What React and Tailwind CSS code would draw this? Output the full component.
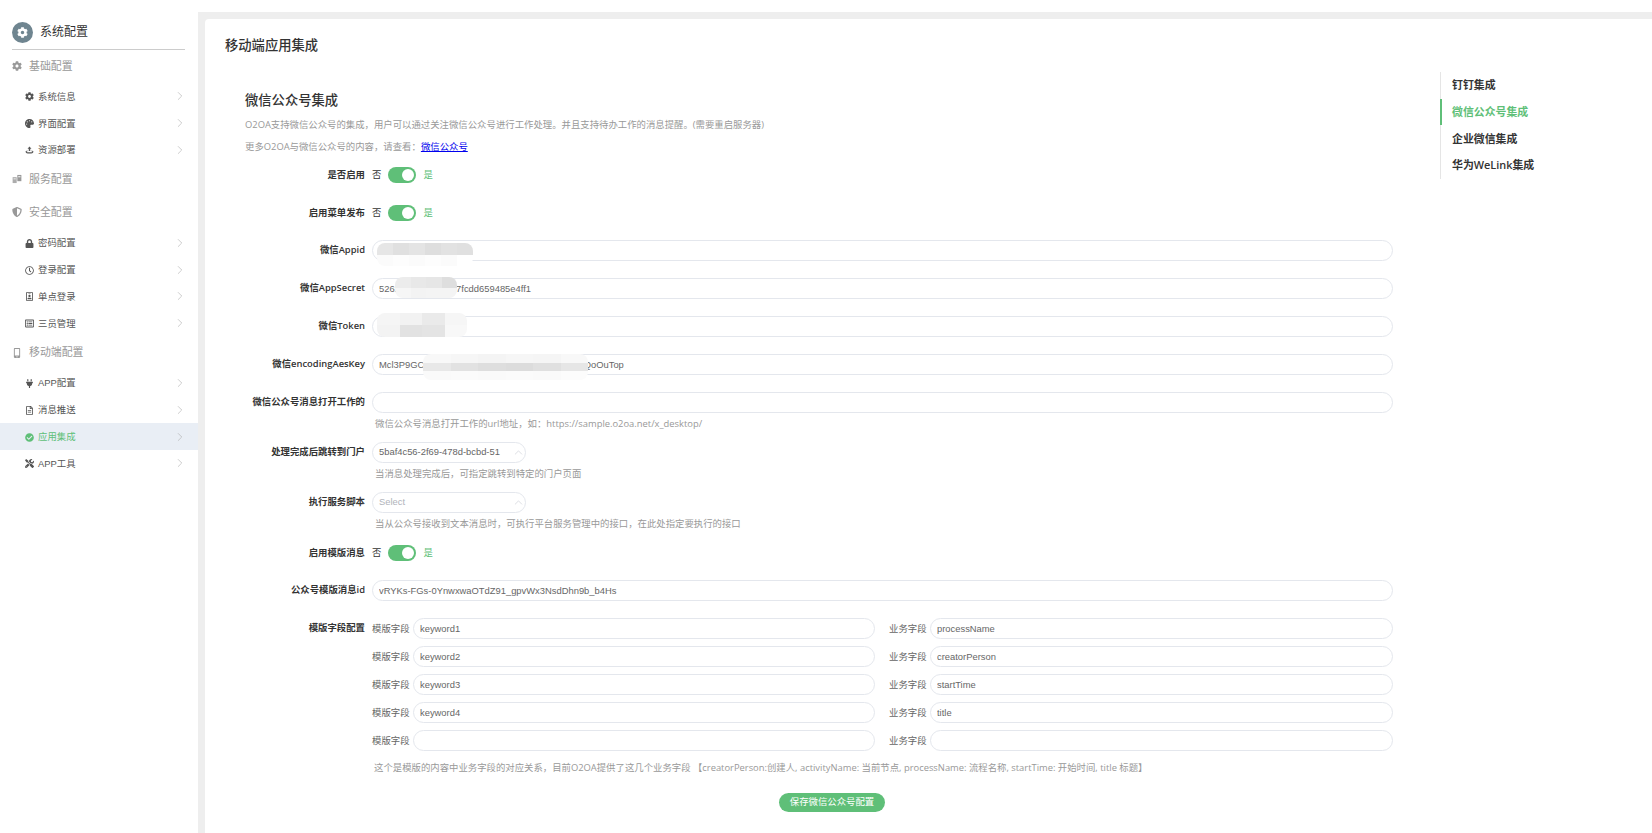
import { ChevronRight, ChevronUp } from 'lucide-react';
import { FaCog, FaLock, FaPlug, FaShieldAlt, FaTools, FaRegClock, FaRegIdBadge, FaRegListAlt, FaMobileAlt, FaRegFileAlt, FaCheckCircle, FaPalette } from 'react-icons/fa';

const TrayIcon = ({ className }) => (
  <svg viewBox="0 0 16 16" className={className} fill="currentColor">
    <path d="M8 1 11.5 5H9.3v4H6.7V5H4.5z" />
    <path d="M1 10c0-1 1.5-1.700 3.500-2v1.500C3.300 9.700 2.800 10 2.800 10.300c0 .5 2.200 1 5.200 1s5.200-.5 5.200-1c0-.3-.5-.6-1.700-.8V8c2 .3 3.500 1 3.500 2 0 2-3 3.500-7 3.500S1 12 1 10z" />
  </svg>
);

const CardsIcon = ({ className }) => (
  <svg viewBox="0 0 16 16" className={className} fill="currentColor">
    <path d="M1 5h6.500v9.500H1z" opacity=".8" />
    <path d="M8.500 1.500H15v10H8.500z" />
    <path d="M2.500 7h3.500v1.500H2.500zM10 3.500h3.500V5H10z" fill="#fff" />
  </svg>
);

// Sidebar groups
const menu = [
  {
    title: '基础配置',
    icon: FaCog,
    items: [
      { label: '系统信息', icon: FaCog },
      { label: '界面配置', icon: FaPalette },
      { label: '资源部署', icon: TrayIcon },
    ],
  },
  { title: '服务配置', icon: CardsIcon, items: [] },
  {
    title: '安全配置',
    icon: FaShieldAlt,
    items: [
      { label: '密码配置', icon: FaLock },
      { label: '登录配置', icon: FaRegClock },
      { label: '单点登录', icon: FaRegIdBadge },
      { label: '三员管理', icon: FaRegListAlt },
    ],
  },
  {
    title: '移动端配置',
    icon: FaMobileAlt,
    items: [
      { label: 'APP配置', icon: FaPlug },
      { label: '消息推送', icon: FaRegFileAlt },
      { label: '应用集成', icon: FaCheckCircle, active: true },
      { label: 'APP工具', icon: FaTools },
    ],
  },
];

const fieldRows = [
  ['keyword1', 'processName'],
  ['keyword2', 'creatorPerson'],
  ['keyword3', 'startTime'],
  ['keyword4', 'title'],
  ['', ''],
];

const tabs = ['钉钉集成', '微信公众号集成', '企业微信集成', '华为WeLink集成'];

// Pixelated patches that hide the secrets in the screenshot
const Mosaic = ({ className, rows }) => (
  <div className={`absolute z-10 overflow-hidden rounded-[8px] flex flex-col ${className}`}>
    {rows.map((row, i) => (
      <div key={i} className="flex flex-1">
        {row.map((c, j) => (
          <div key={j} className="flex-1" style={{ background: c }} />
        ))}
      </div>
    ))}
  </div>
);

const Sidebar = () => (
  <aside className="w-[198px] shrink-0 bg-white">
    <div className="ml-[12px] mr-[13px] h-[50px] pt-[12px] flex items-start border-b border-[#cccccc]">
      <div className="w-[21px] h-[21px] mt-[10px] -mb-px rounded-full bg-[#6f8590] flex items-center justify-center">
        <FaCog className="w-[11px] h-[11px] text-white" />
      </div>
      <span className="ml-[7px] mt-[12px] text-[12px] leading-[16px] text-[#333333]">系统配置</span>
    </div>
    {menu.map((group) => (
      <div key={group.title}>
        <div className="h-[33px] pb-px flex items-center pl-[12px] text-[#999999]">
          <group.icon className="w-[10px] h-[10px]" />
          <span className="ml-[7px] text-[10.9px]">{group.title}</span>
        </div>
        {group.items.map((item) => (
          <div
            key={item.label}
            className={`h-[26.8px] pt-px flex items-center pl-[25px] pr-[11px] text-[9.4px] ${item.active ? 'bg-[#e9eef5] text-[#5fbf78]' : 'text-[#555555]'}`}
          >
            <item.icon className="w-[9px] h-[9px] shrink-0" />
            <span className="ml-[4px] flex-1">{item.label}</span>
            <ChevronRight className="w-[14px] h-[14px] text-[#aaaaaa] -mt-px" strokeWidth={1} />
          </div>
        ))}
      </div>
    ))}
  </aside>
);

const Label = ({ children }) => (
  <div className="w-[120px] shrink-0 text-right text-[9.4px] font-semibold text-[#333333] whitespace-nowrap font-['Open_Sans','Noto_Sans_CJK_SC',sans-serif]">{children}</div>
);

const Hint = ({ children, className = '' }) => (
  <div className={`h-[14px] leading-[14px] text-[9.4px] text-[#999999] whitespace-nowrap font-['Open_Sans','Noto_Sans_CJK_SC',sans-serif] ${className}`}>{children}</div>
);

const TextBox = ({ value = '', className = '' }) => (
  <input
    readOnly
    value={value}
    className={`h-[21px] px-[6px] rounded-full border border-[#e4e7ed] bg-white text-[9.4px] text-[#666666] outline-none ${className}`}
  />
);

const InputRow = ({ label, value, className = '' }) => (
  <div className={`flex items-center gap-[7px] h-[21px] ${className}`}>
    <Label>{label}</Label>
    <TextBox value={value} className="flex-1 min-w-0" />
  </div>
);

const SelectRow = ({ label, value, placeholder, className = '' }) => (
  <div className={`flex items-center gap-[7px] h-[21px] ${className}`}>
    <Label>{label}</Label>
    <div className="w-[154px] h-[21px] pl-[6px] rounded-full border border-[#e4e7ed] flex items-center justify-between text-[9.4px]">
      <span className={placeholder ? 'text-[#b0b3ba]' : 'text-[#666666]'}>{placeholder || value}</span>
      <ChevronUp className="w-[13px] h-[13px] text-[#c0c4cc]" strokeWidth={1} />
    </div>
  </div>
);

const SwitchRow = ({ label, className = '' }) => (
  <div className={`flex items-center gap-[7px] h-[16px] ${className}`}>
    <Label>{label}</Label>
    <span className="text-[9.4px] text-[#333333]">否</span>
    <div className="w-[28px] h-[16px] rounded-full bg-[#5fbf78] flex items-center justify-end pr-[2px]">
      <div className="w-[12px] h-[12px] rounded-full bg-white" />
    </div>
    <span className="text-[9.4px] text-[#5fbf78]">是</span>
  </div>
);

function App() {
  return (
    <div className="flex h-screen w-full overflow-hidden bg-white font-['Liberation_Sans','Noto_Sans_CJK_SC',sans-serif]">
      <Sidebar />
      <main className="flex-1 min-w-0 pt-[12px]">
        <div className="h-full bg-[#eeeeee] pl-[7px] pt-[7px]">
          <div className="h-full bg-white rounded-tl-[4px] flex">
            <div className="w-[1235px] shrink-0 pl-[40px] pr-[47px] relative">
              <div className="-ml-[20px] h-[52px] pt-px flex items-center text-[13.3px] font-medium text-[#333333]">移动端应用集成</div>
              <div className="mt-[20px] h-[20px] leading-[20px] text-[13.3px] font-medium text-[#333333]">微信公众号集成</div>
              <Hint className="mt-[7px]">O2OA支持微信公众号的集成，用户可以通过关注微信公众号进行工作处理。并且支持待办工作的消息提醒。(需要重启服务器)</Hint>
              <Hint className="mt-[8px]">
                更多O2OA与微信公众号的内容，请查看：<a className="text-[#0000ee] underline">微信公众号</a>
              </Hint>

              <SwitchRow label="是否启用" className="mt-[13px]" />
              <SwitchRow label="启用菜单发布" className="mt-[22px]" />

              <InputRow label="微信Appid" className="mt-[19px]" />
              <InputRow label="微信AppSecret" value="526xxxxxxxxxxxx17fcdd659485e4ff1" className="mt-[17px]" />
              <InputRow label="微信Token" className="mt-[17px]" />
              <InputRow label="微信encodingAesKey" value="Mcl3P9GCxxxxxxxxxxxxxxxxxxxxxxxxxxxxxxxxxxQoOuTop" className="mt-[17px]" />
              <InputRow label="微信公众号消息打开工作的" className="mt-[17px]" />
              <Hint className="mt-[4px] ml-[130px]">微信公众号消息打开工作的url地址，如：https://sample.o2oa.net/x_desktop/</Hint>

              <SelectRow label="处理完成后跳转到门户" value="5baf4c56-2f69-478d-bcbd-51" className="mt-[11px]" />
              <Hint className="mt-[4px] ml-[130px]">当消息处理完成后，可指定跳转到特定的门户页面</Hint>
              <SelectRow label="执行服务脚本" placeholder="Select" className="mt-[11px]" />
              <Hint className="mt-[4px] ml-[130px]">当从公众号接收到文本消息时，可执行平台服务管理中的接口，在此处指定要执行的接口</Hint>

              <SwitchRow label="启用模版消息" className="mt-[14px]" />
              <InputRow label="公众号模版消息id" value="vRYKs-FGs-0YnwxwaOTdZ91_gpvWx3NsdDhn9b_b4Hs" className="mt-[19px]" />

              <div className="mt-[17px] flex gap-[7px]">
                <div className="w-[120px] shrink-0 h-[21px] pt-[3px]">
                  <Label>模版字段配置</Label>
                </div>
                <div className="flex-1 min-w-0 flex flex-col gap-[7px]">
                  {fieldRows.map(([left, right], i) => (
                    <div key={i} className="flex items-center h-[21px] text-[9.4px] text-[#666666]">
                      <span className="w-[41px] shrink-0 pt-[2px]">模版字段</span>
                      <TextBox value={left} className="w-[462px]" />
                      <span className="ml-[14px] w-[41px] shrink-0 pt-[2px]">业务字段</span>
                      <TextBox value={right} className="flex-1 min-w-0" />
                    </div>
                  ))}
                </div>
              </div>
              <Hint className="mt-[10px] ml-[129px]">这个是模版的内容中业务字段的对应关系，目前O2OA提供了这几个业务字段 【creatorPerson:创建人, activityName: 当前节点, processName: 流程名称, startTime: 开始时间, title 标题】</Hint>

              <button className="mt-[18px] ml-[534px] w-[106px] h-[19px] rounded-full bg-[#5fbf78] text-white text-[9.4px] flex items-center justify-center">保存微信公众号配置</button>

              {/* masks over the secret values */}
              <Mosaic className="left-[172px] top-[224px] w-[96px] h-[23px]" rows={[['#e6e6e6', '#e0e0e0', '#e4e4e4', '#dedede', '#e2e2e2', '#e0e0e0'], ['#fbfbfb', '#fdfdfd', '#fbfbfb', '#fdfdfd', '#fbfbfb', '#ffffff']]} />
              <Mosaic className="left-[190px] top-[258px] w-[62px] h-[21px]" rows={[['#ececec', '#e8e8e8', '#e6e6e6', '#dedede'], ['#f6f6f6', '#f3f3f3', '#f4f4f4', '#f4f4f4']]} />
              <Mosaic className="left-[172px] top-[294px] w-[90px] h-[24px]" rows={[['#f5f5f5', '#f2f2f2', '#eaeaea', '#f6f6f6'], ['#f3f3f3', '#e2e2e2', '#e4e4e4', '#f8f8f8']]} />
              <Mosaic className="left-[218px] top-[335px] w-[165px] h-[26px]" rows={[['#f8f8f8', '#f6f6f6', '#f4f4f4', '#f6f6f6', '#f5f5f5', '#f8f8f8'], ['#e8e8e8', '#e2e2e2', '#dedede', '#dcdcdc', '#e0e0e0', '#e6e6e6'], ['#fafafa', '#fbfbfb', '#fafafa', '#fbfbfb', '#fafafa', '#fcfcfc']]} />
            </div>

            {/* right anchor nav */}
            <div className="mt-[53px] h-[107px] w-[180px] border-l border-[#e5e5e5] flex flex-col">
              {tabs.map((tab, i) => (
                <div
                  key={tab}
                  className={`h-[26.7px] pl-[10px] -ml-px flex items-center text-[10.9px] font-semibold border-l-2 font-['Open_Sans','Noto_Sans_CJK_SC',sans-serif] ${i === 1 ? 'border-[#5fbf78] text-[#5fbf78]' : 'border-transparent text-[#333333]'}`}
                >
                  {tab}
                </div>
              ))}
            </div>
          </div>
        </div>
      </main>
    </div>
  );
}

export default App;
